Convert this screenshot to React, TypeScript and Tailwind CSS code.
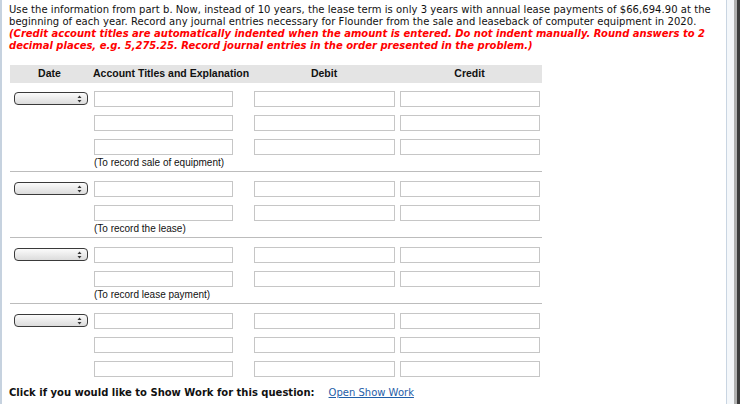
import React from "react";

const font = { fontFamily: '"DejaVu Sans", Verdana, sans-serif' };
const sansFont = { fontFamily: '"Liberation Sans", Tahoma, Arial, sans-serif' };

function Select() {
  return (
    <div className="relative mt-[1px] h-[13px] w-[74px] rounded-[4px] border border-[#3a3a3a] bg-gradient-to-b from-[#fbfbfb] to-[#dcdcdc]">
      <svg className="absolute right-[5px] top-[2px]" width="5" height="8" viewBox="0 0 5 8">
        <path d="M2.5 0.5 L4.5 3 L0.5 3 Z" fill="#333" />
        <path d="M2.5 7.5 L4.5 5 L0.5 5 Z" fill="#333" />
      </svg>
    </div>
  );
}

function Input({ w }: { w: string }) {
  return <div className={`h-[16px] ${w} border border-[#c6c6c6] bg-white`} />;
}

function Row({ first }: { first?: boolean }) {
  return (
    <div className="flex items-start h-[16px]">
      <div className="w-[81px] flex justify-center">{first ? <Select /> : null}</div>
      <div className="w-[160px] pl-[3px]">
        <Input w="w-[139px]" />
      </div>
      <div className="w-[146px] pl-[3px]">
        <Input w="w-[141px]" />
      </div>
      <div className="w-[145px] pl-[3px]">
        <Input w="w-[140px]" />
      </div>
    </div>
  );
}

function Section({ rows, note, first }: { rows: number; note?: string; first?: boolean }) {
  return (
    <div className={`${first ? "pt-[8px]" : "pt-[9px]"} flex flex-col`}>
      <div className="flex flex-col gap-[8px]">
        {Array.from({ length: rows }).map((_, i) => (
          <Row key={i} first={i === 0} />
        ))}
      </div>
      {note ? (
        <div
          className="h-[17px] border-b border-[#bcbcbc] pl-[84px] pt-[1px] text-[10px] leading-[13px] text-[#111] whitespace-nowrap"
          style={sansFont}
        >
          {note}
        </div>
      ) : null}
    </div>
  );
}

export default function App() {
  return (
    <div className="w-[740px] h-[404px] overflow-hidden flex bg-white text-[#111]" style={font}>
      <div className="w-[2px] bg-[#c6d2df]" />
      <div className="w-[724px] pl-[7px] pt-[4px] flex flex-col">
        <div className="text-[10px] leading-[12px] whitespace-nowrap">
          <div className="tracking-[0.05px]">
            Use the information from part b. Now, instead of 10 years, the lease term is only 3 years with annual lease
            payments of $66,694.90 at the
          </div>
          <div className="tracking-[0.05px]">
            beginning of each year. Record any journal entries necessary for Flounder from the sale and leaseback of
            computer equipment in 2020.
          </div>
          <div className="text-[#ff0000] font-bold italic">
            (Credit account titles are automatically indented when the amount is entered. Do not indent manually. Round
            answers to 2
          </div>
          <div className="text-[#ff0000] font-bold italic">
            decimal places, e.g. 5,275.25. Record journal entries in the order presented in the problem.)
          </div>
        </div>
        <div className="ml-[1px] mt-[13px] w-[532px]">
          <div
            className="flex h-[18px] items-center bg-[#e4e4e4] text-[10.5px] font-bold whitespace-nowrap"
            style={sansFont}
          >
            <div className="w-[79px] text-center">Date</div>
            <div className="w-[162px] pl-[4px]">Account Titles and Explanation</div>
            <div className="w-[146px] text-center">Debit</div>
            <div className="w-[145px] text-center">Credit</div>
          </div>
          <Section rows={3} note="(To record sale of equipment)" first />
          <Section rows={2} note="(To record the lease)" />
          <Section rows={2} note="(To record lease payment)" />
          <Section rows={3} />
        </div>
        <div className="mt-[9px] text-[10px] leading-[14px] whitespace-nowrap">
          <span className="font-bold">Click if you would like to Show Work for this question:</span>
          <span className="ml-[14px] text-[#1f5ea8] underline">Open Show Work</span>
        </div>
      </div>
      <div className="w-[1px] bg-[#c9d5e2]" />
      <div className="w-[7px] bg-[#f4f7fa]" />
      <div className="w-[3px] bg-[#b0b0b0]" />
      <div className="w-[3px] bg-[#3c3c3c]" />
    </div>
  );
}
